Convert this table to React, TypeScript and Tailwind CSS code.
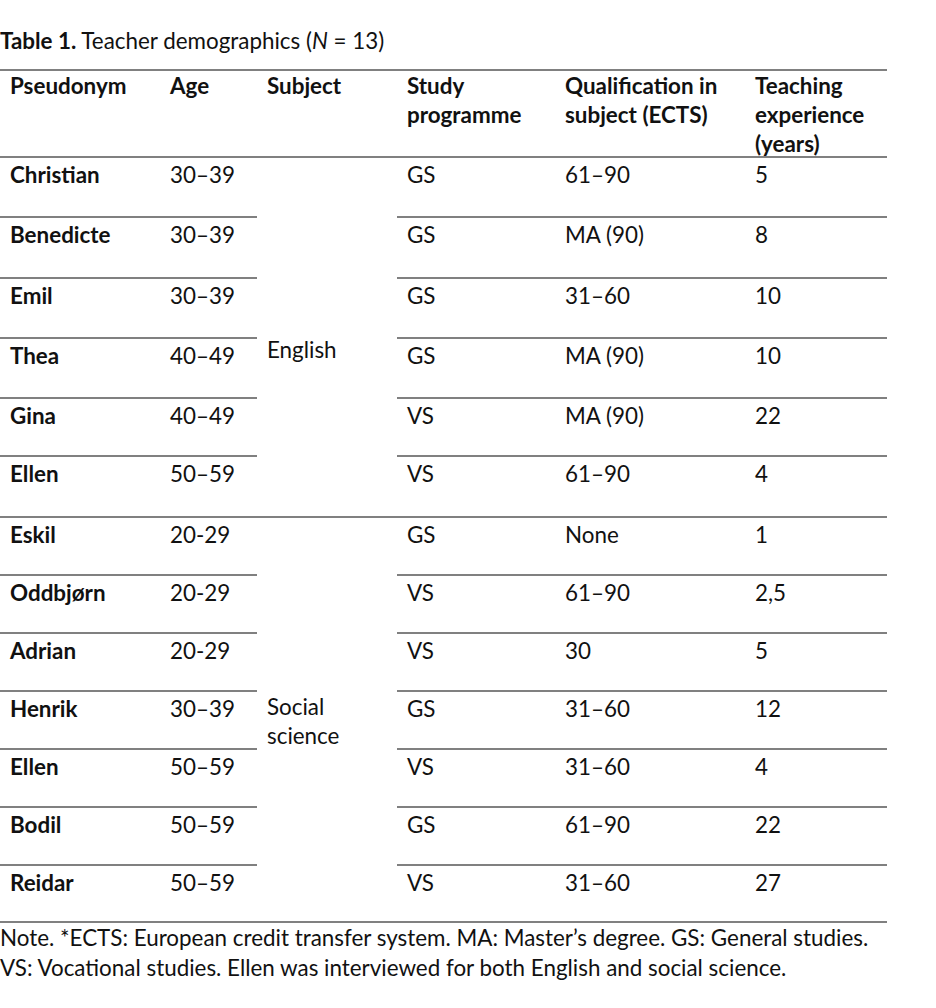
const rows = [
  { name: "Christian", age: "30–39", prog: "GS", qual: "61–90", exp: "5" },
  { name: "Benedicte", age: "30–39", prog: "GS", qual: "MA (90)", exp: "8" },
  { name: "Emil", age: "30–39", prog: "GS", qual: "31–60", exp: "10" },
  { name: "Thea", age: "40–49", prog: "GS", qual: "MA (90)", exp: "10" },
  { name: "Gina", age: "40–49", prog: "VS", qual: "MA (90)", exp: "22" },
  { name: "Ellen", age: "50–59", prog: "VS", qual: "61–90", exp: "4" },
  { name: "Eskil", age: "20-29", prog: "GS", qual: "None", exp: "1" },
  { name: "Oddbjørn", age: "20-29", prog: "VS", qual: "61–90", exp: "2,5" },
  { name: "Adrian", age: "20-29", prog: "VS", qual: "30", exp: "5" },
  { name: "Henrik", age: "30–39", prog: "GS", qual: "31–60", exp: "12" },
  { name: "Ellen", age: "50–59", prog: "VS", qual: "31–60", exp: "4" },
  { name: "Bodil", age: "50–59", prog: "GS", qual: "61–90", exp: "22" },
  { name: "Reidar", age: "50–59", prog: "VS", qual: "31–60", exp: "27" },
];

const cell = "border-t-2 border-[#808080] pl-[10px] pt-[2px]";
const head = "border-t-2 border-[#808080] pl-[10px] font-bold";

export default function App() {
  return (
    <div className="w-[936px] h-[1008px] bg-white text-[#111] text-[22.4px] leading-[29px] font-['Lato','Liberation_Sans',sans-serif]">
      <div className="pt-[26px] pb-[14px]">
        <span className="font-bold">Table 1.</span> Teacher demographics (<i>N</i> = 13)
      </div>

      <div className="w-[887px] grid grid-cols-[160px_97px_140px_158px_190px_142px] grid-rows-[87px_60px_61px_60px_60px_58px_61px_58px_58px_58px_58px_58px_58px_57px] border-b-2 border-[#808080]">
        {/* Header */}
        <div className={head}>Pseudonym</div>
        <div className={head}>Age</div>
        <div className={head}>Subject</div>
        <div className={head}>Study<br />programme</div>
        <div className={head}>Qualification in<br />subject (ECTS)</div>
        <div className={head}>Teaching<br />experience<br />(years)</div>

        {/* Body */}
        {rows.map((r, i) => (
          <div key={i} className="contents">
            <div className={`${cell} font-bold`}>{r.name}</div>
            <div className={cell}>{r.age}</div>
            {i === 0 && (
              <div className="row-span-6 border-t-2 border-[#808080] pl-[10px] flex items-center pt-[24px]">
                English
              </div>
            )}
            {i === 6 && (
              <div className="row-span-7 border-t-2 border-[#808080] pl-[10px] flex items-center pt-[2px]">
                Social<br />science
              </div>
            )}
            <div className={cell}>{r.prog}</div>
            <div className={cell}>{r.qual}</div>
            <div className={cell}>{r.exp}</div>
          </div>
        ))}
      </div>

      <div className="leading-[30px]">
        Note. *ECTS: European credit transfer system. MA: Master’s degree. GS: General studies.
        <br />
        VS: Vocational studies. Ellen was interviewed for both English and social science.
      </div>
    </div>
  );
}
